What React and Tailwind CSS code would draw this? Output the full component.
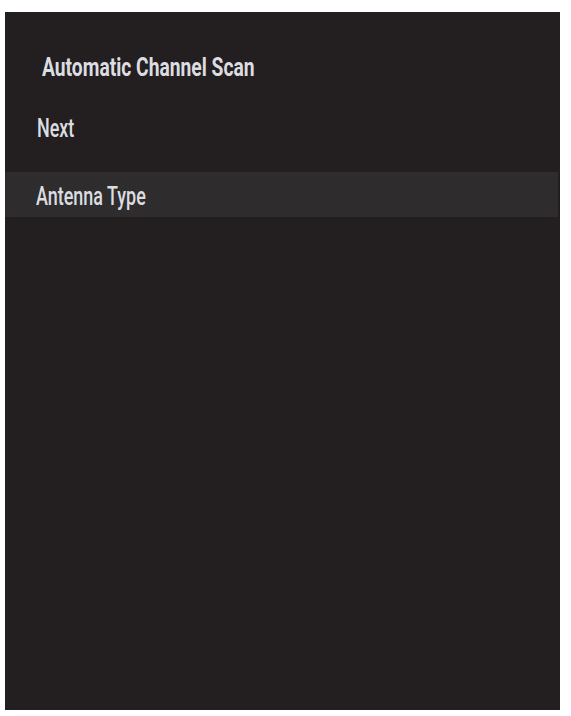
export default function App() {
  return (
    <div className="w-[571px] h-[716px] bg-white pt-[12px] pl-[5px]" style={{ fontFamily: "Roboto, 'Noto Sans', sans-serif" }}>
      <div className="w-[555px] h-[698px] bg-[#231f20] flex flex-col">
        <div className="pt-[41px] pl-[37px] h-[28px] box-content">
          <span className="inline-block origin-left scale-x-[0.74] text-[26px] leading-[28px] font-bold text-[#dcdde0] whitespace-nowrap">Automatic Channel Scan</span>
        </div>
        <div className="pt-[33px] pl-[32px] h-[28px] box-content">
          <span className="inline-block origin-left scale-x-[0.69] text-[26px] leading-[28px] font-medium text-[#dcdde0] whitespace-nowrap">Next</span>
        </div>
        <div className="mt-[30px] h-[45px] w-[553px] bg-[#2e2c2d] flex items-center pl-[31px] pt-[3px]">
          <span className="inline-block origin-left scale-x-[0.69] text-[26px] leading-[28px] font-medium text-[#dcdde0] whitespace-nowrap">Antenna Type</span>
        </div>
      </div>
    </div>
  );
}
